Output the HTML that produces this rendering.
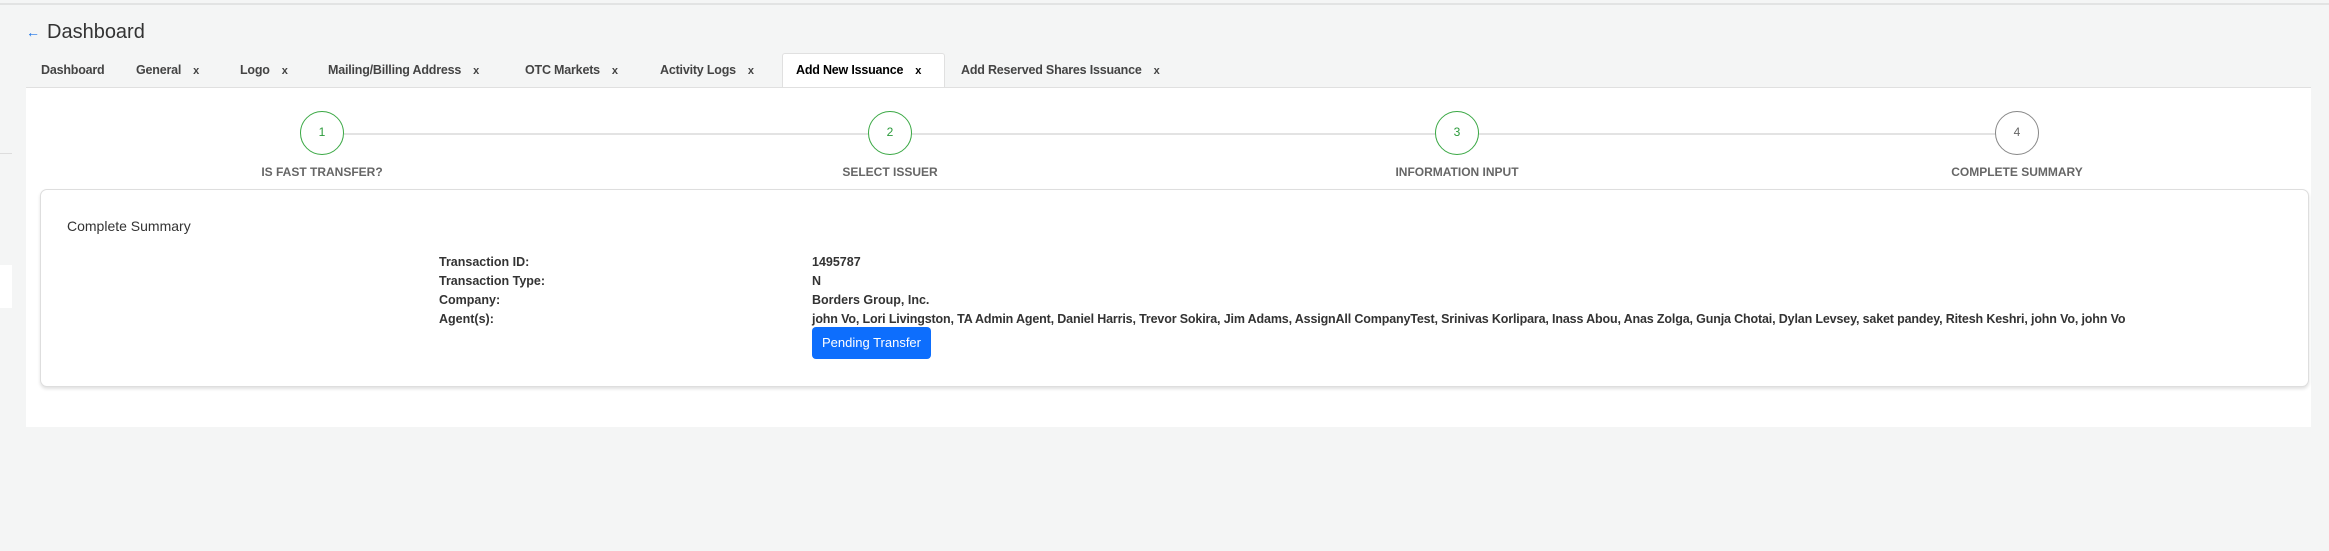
<!DOCTYPE html>
<html><head><meta charset="utf-8"><style>
*{box-sizing:border-box;margin:0;padding:0}
body{width:2329px;height:551px;background:#f4f5f5;font-family:"Liberation Sans",sans-serif;position:relative;overflow:hidden;color:#333}
.abs{position:absolute}
.topline{left:0;top:3px;width:2329px;height:2px;background:#e2e3e3}
.title{left:47px;top:21px;font-size:20px;color:#333}
.arrow{left:26px;top:24px;color:#1a73e8;font-size:14px;font-weight:bold}
.tab{top:63px;font-size:12.5px;font-weight:bold;color:#444;white-space:nowrap;letter-spacing:-0.2px}
.tab span{margin-left:12px;font-weight:bold;font-size:11px}
.active{left:782px;top:53px;width:163px;height:35px;background:#fff;border:1px solid #e0e0e0;border-bottom:none;border-radius:3px 3px 0 0}
.panel{left:26px;top:87px;width:2285px;height:340px;background:#fff;border-top:1px solid #e0e0e0}
.line{top:133px;height:2px;background:#e3e3e3}
.circ{width:44px;height:44px;border-radius:50%;border:1.5px solid #3aa844;color:#2a9a3a;font-size:12px;text-align:center;line-height:41px;top:111px;background:#fff}
.lab{top:165px;font-size:12px;font-weight:bold;color:#666;width:300px;text-align:center}
.card{left:40px;top:189px;width:2269px;height:198px;border:1px solid #dedede;border-radius:7px;background:#fff;box-shadow:0 2px 3px rgba(0,0,0,.12)}
.row{font-size:12.5px;font-weight:bold;color:#333;white-space:nowrap}
.btn{left:812px;top:327px;width:119px;height:32px;background:#0d6efd;color:#fff;border-radius:4px;font-size:13px;text-align:center;line-height:32px}
</style></head><body>
<div class="abs topline"></div>
<div class="abs arrow">←</div>
<div class="abs title">Dashboard</div>
<div class="abs" style="left:0;top:153px;width:12px;height:1px;background:#ddd"></div>
<div class="abs" style="left:0;top:265px;width:12px;height:43px;background:#fff"></div>
<div class="abs active"></div>
<div class="abs tab" style="left:41px">Dashboard</div>
<div class="abs tab" style="left:136px">General<span>x</span></div>
<div class="abs tab" style="left:240px">Logo<span>x</span></div>
<div class="abs tab" style="left:328px">Mailing/Billing Address<span>x</span></div>
<div class="abs tab" style="left:525px">OTC Markets<span>x</span></div>
<div class="abs tab" style="left:660px">Activity Logs<span>x</span></div>
<div class="abs tab" style="left:796px;color:#000">Add New Issuance<span>x</span></div>
<div class="abs tab" style="left:961px">Add Reserved Shares Issuance<span>x</span></div>
<div class="abs panel"></div>
<div class="abs line" style="left:344px;width:1665px"></div>
<div class="abs circ" style="left:300px">1</div>
<div class="abs circ" style="left:868px">2</div>
<div class="abs circ" style="left:1435px">3</div>
<div class="abs circ" style="left:1995px;border-color:#888;color:#666">4</div>
<div class="abs lab" style="left:172px">IS FAST TRANSFER?</div>
<div class="abs lab" style="left:740px">SELECT ISSUER</div>
<div class="abs lab" style="left:1307px">INFORMATION INPUT</div>
<div class="abs lab" style="left:1867px">COMPLETE SUMMARY</div>
<div class="abs card"></div>
<div class="abs" style="left:67px;top:218px;font-size:14px;color:#333">Complete Summary</div>
<div class="abs row" style="left:439px;top:255px">Transaction ID:</div>
<div class="abs row" style="left:439px;top:274px">Transaction Type:</div>
<div class="abs row" style="left:439px;top:293px">Company:</div>
<div class="abs row" style="left:439px;top:312px">Agent(s):</div>
<div class="abs row" style="left:812px;top:255px">1495787</div>
<div class="abs row" style="left:812px;top:274px">N</div>
<div class="abs row" style="left:812px;top:293px">Borders Group, Inc.</div>
<div class="abs row" style="left:812px;top:312px;letter-spacing:-0.15px">john Vo, Lori Livingston, TA Admin Agent, Daniel Harris, Trevor Sokira, Jim Adams, AssignAll CompanyTest, Srinivas Korlipara, Inass Abou, Anas Zolga, Gunja Chotai, Dylan Levsey, saket pandey, Ritesh Keshri, john Vo, john Vo</div>
<div class="abs btn">Pending Transfer</div>
</body></html>
